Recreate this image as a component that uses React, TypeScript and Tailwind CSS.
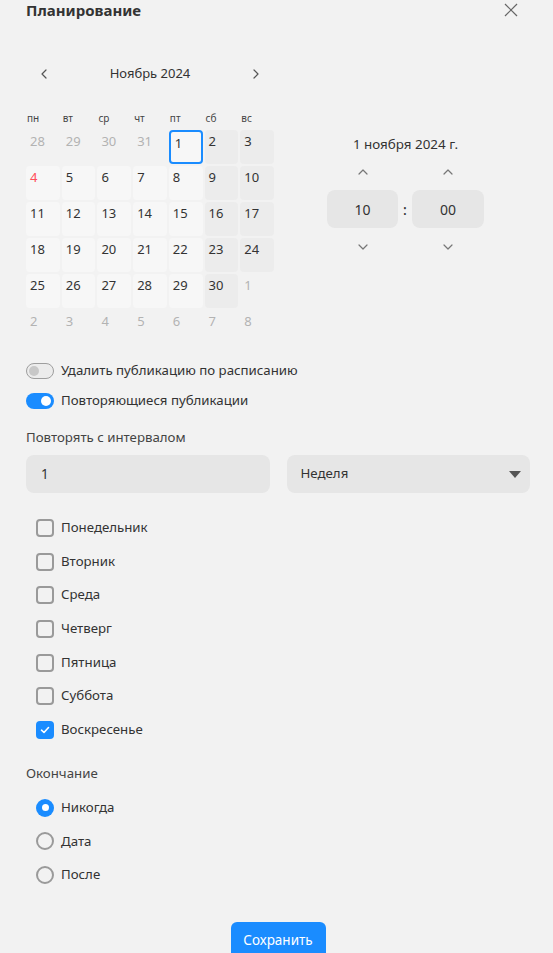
import React from "react";

type Kind = "other" | "day" | "weekend";
type Cell = { d: number; kind: Kind; red?: boolean; selected?: boolean };

const rows: Cell[][] = [
  [
    { d: 28, kind: "other" },
    { d: 29, kind: "other" },
    { d: 30, kind: "other" },
    { d: 31, kind: "other" },
    { d: 1, kind: "day", selected: true },
    { d: 2, kind: "weekend" },
    { d: 3, kind: "weekend" },
  ],
  [
    { d: 4, kind: "day", red: true },
    { d: 5, kind: "day" },
    { d: 6, kind: "day" },
    { d: 7, kind: "day" },
    { d: 8, kind: "day" },
    { d: 9, kind: "weekend" },
    { d: 10, kind: "weekend" },
  ],
  [
    { d: 11, kind: "day" },
    { d: 12, kind: "day" },
    { d: 13, kind: "day" },
    { d: 14, kind: "day" },
    { d: 15, kind: "day" },
    { d: 16, kind: "weekend" },
    { d: 17, kind: "weekend" },
  ],
  [
    { d: 18, kind: "day" },
    { d: 19, kind: "day" },
    { d: 20, kind: "day" },
    { d: 21, kind: "day" },
    { d: 22, kind: "day" },
    { d: 23, kind: "weekend" },
    { d: 24, kind: "weekend" },
  ],
  [
    { d: 25, kind: "day" },
    { d: 26, kind: "day" },
    { d: 27, kind: "day" },
    { d: 28, kind: "day" },
    { d: 29, kind: "day" },
    { d: 30, kind: "weekend" },
    { d: 1, kind: "other" },
  ],
  [
    { d: 2, kind: "other" },
    { d: 3, kind: "other" },
    { d: 4, kind: "other" },
    { d: 5, kind: "other" },
    { d: 6, kind: "other" },
    { d: 7, kind: "other" },
    { d: 8, kind: "other" },
  ],
];

const weekdays = ["пн", "вт", "ср", "чт", "пт", "сб", "вс"];
const days = ["Понедельник", "Вторник", "Среда", "Четверг", "Пятница", "Суббота", "Воскресенье"];

function Chevron({ dir, className }: { dir: "left" | "right" | "up" | "down"; className?: string }) {
  const pts: Record<string, string> = {
    left: "6,1 2,5 6,9",
    right: "2,1 6,5 2,9",
    up: "1,6 5,2 9,6",
    down: "1,3 5,7 9,3",
  };
  const horiz = dir === "left" || dir === "right";
  return (
    <svg
      width={horiz ? 8 : 10}
      height={horiz ? 10 : 8}
      viewBox={horiz ? "0 0 8 10" : "0 0 10 8"}
      className={className}
    >
      <polyline points={pts[dir]} fill="none" stroke="currentColor" strokeWidth="1.2" strokeLinecap="round" strokeLinejoin="round" />
    </svg>
  );
}

function DayCell({ c }: { c: Cell }) {
  let cls = "h-[34px] rounded-[4px] pl-[4px] pt-[2px] text-[13px] leading-[18px] ";
  if (c.kind === "other") cls += "text-[#b3b3b3]";
  else if (c.kind === "weekend") cls += "bg-[#ececec] text-[#333]";
  else cls += "bg-[#f7f7f7] " + (c.red ? "text-[#ff4d5a]" : "text-[#333]");
  if (c.selected) cls += " border-2 border-[#1a8cff] pl-[2px] pt-0";
  return <div className={cls}>{c.d}</div>;
}

function Toggle({ on }: { on: boolean }) {
  return on ? (
    <div className="w-[28px] h-[16px] rounded-full bg-[#1a8cff] flex items-center justify-end pr-[3px]">
      <div className="w-[10px] h-[10px] rounded-full bg-white" />
    </div>
  ) : (
    <div className="w-[28px] h-[16px] rounded-full border-[1.5px] border-[#9e9e9e] bg-[#ececec] flex items-center pl-[2px]">
      <div className="w-[10px] h-[10px] rounded-full bg-[#c8c8c8]" />
    </div>
  );
}

function Checkbox({ checked }: { checked: boolean }) {
  return checked ? (
    <div className="w-[18px] h-[18px] rounded-[4px] bg-[#1a8cff] flex items-center justify-center">
      <svg width="12" height="12" viewBox="0 0 12 12">
        <polyline points="2.5,6.2 5,8.5 9.5,3.5" fill="none" stroke="white" strokeWidth="1.6" strokeLinecap="round" strokeLinejoin="round" />
      </svg>
    </div>
  ) : (
    <div className="w-[18px] h-[18px] rounded-[4px] border-2 border-[#9a9a9a]" />
  );
}

function Radio({ checked }: { checked: boolean }) {
  return checked ? (
    <div className="w-[18px] h-[18px] rounded-full bg-[#1a8cff] flex items-center justify-center">
      <div className="w-[7px] h-[7px] rounded-full bg-white" />
    </div>
  ) : (
    <div className="w-[18px] h-[18px] rounded-full border-2 border-[#9a9a9a]" />
  );
}

export default function App() {
  return (
    <div className="w-[553px] h-[953px] overflow-hidden bg-[#f2f2f2] pl-[26px] pr-[23px] text-[#333] font-['Noto_Sans','Open_Sans',sans-serif]">
      {/* Header */}
      <div className="h-[20px] flex items-center justify-between">
        <div className="text-[15px] font-bold leading-[20px] text-[#333]">Планирование</div>
        <svg width="14" height="14" viewBox="0 0 14 14" className="mr-[12px] text-[#666]">
          <line x1="1" y1="1" x2="13" y2="13" stroke="currentColor" strokeWidth="1.2" />
          <line x1="13" y1="1" x2="1" y2="13" stroke="currentColor" strokeWidth="1.2" />
        </svg>
      </div>

      {/* Calendar + time */}
      <div className="mt-[42px] flex">
        <div className="w-[248px]">
          <div className="h-[24px] flex items-center justify-between px-[14px] text-[#555]">
            <Chevron dir="left" />
            <div className="text-[13px] text-[#333]">Ноябрь 2024</div>
            <Chevron dir="right" />
          </div>
          <div className="mt-[24px] h-[16px] grid grid-cols-7 gap-x-[2px]">
            {weekdays.map((w) => (
              <div key={w} className="pl-[1px] text-[10px] leading-[16px] text-[#444]">
                {w}
              </div>
            ))}
          </div>
          <div className="mt-[4px] grid grid-cols-7 gap-[2px]">
            {rows.flat().map((c, i) => (
              <DayCell key={i} c={c} />
            ))}
          </div>
        </div>

        <div className="flex-1 pl-[7px] flex flex-col items-center">
          <div className="mt-[72px] h-[20px] text-[13.4px] leading-[20px] text-[#333]">1 ноября 2024 г.</div>
          <div className="mt-[10px] flex items-center gap-[5px]">
            <div className="w-[71px] flex flex-col items-center">
              <div className="h-[16px] flex items-center text-[#777]">
                <Chevron dir="up" />
              </div>
              <div className="mt-[10px] w-[71px] h-[38px] rounded-[8px] bg-[#e6e6e6] flex items-center justify-center text-[14px] text-[#333]">
                10
              </div>
              <div className="mt-[10px] h-[16px] flex items-center text-[#777]">
                <Chevron dir="down" />
              </div>
            </div>
            <div className="text-[14px] font-medium text-[#333]">:</div>
            <div className="w-[72px] flex flex-col items-center">
              <div className="h-[16px] flex items-center text-[#777]">
                <Chevron dir="up" />
              </div>
              <div className="mt-[10px] w-[72px] h-[38px] rounded-[8px] bg-[#e6e6e6] flex items-center justify-center text-[14px] text-[#333]">
                00
              </div>
              <div className="mt-[10px] h-[16px] flex items-center text-[#777]">
                <Chevron dir="down" />
              </div>
            </div>
          </div>
        </div>
      </div>

      {/* Toggles */}
      <div className="mt-[17px] h-[20px] flex items-center gap-[7px]">
        <Toggle on={false} />
        <span className="text-[13.25px] text-[#333]">Удалить публикацию по расписанию</span>
      </div>
      <div className="mt-[10px] h-[20px] flex items-center gap-[7px]">
        <Toggle on={true} />
        <span className="text-[13.25px] text-[#333]">Повторяющиеся публикации</span>
      </div>

      {/* Interval */}
      <div className="mt-[16px] h-[20px] text-[13.25px] leading-[20px] text-[#444]">Повторять с интервалом</div>
      <div className="mt-[8px] grid grid-cols-2 gap-[17px]">
        <div className="h-[38px] rounded-[8px] bg-[#e6e6e6] flex items-center pl-[15px] text-[13.5px] text-[#333]">1</div>
        <div className="h-[38px] rounded-[8px] bg-[#e6e6e6] flex items-center justify-between pl-[14px] pr-[9px] text-[13.25px] text-[#333]">
          <span>Неделя</span>
          <svg width="12" height="7" viewBox="0 0 12 7">
            <polygon points="0,0 12,0 6,7" fill="#555" />
          </svg>
        </div>
      </div>

      {/* Weekdays */}
      <div className="mt-[23px] flex flex-col gap-[9.67px] pl-[10px]">
        {days.map((d, i) => (
          <div key={d} className="h-[24px] flex items-center gap-[7px]">
            <Checkbox checked={i === 6} />
            <span className="text-[13.25px] text-[#333]">{d}</span>
          </div>
        ))}
      </div>

      {/* End */}
      <div className="mt-[21px] h-[20px] text-[13.25px] leading-[20px] text-[#444]">Окончание</div>
      <div className="mt-[13px] flex flex-col gap-[9.5px] pl-[10px]">
        {["Никогда", "Дата", "После"].map((r, i) => (
          <div key={r} className="h-[24px] flex items-center gap-[7px]">
            <Radio checked={i === 0} />
            <span className="text-[13.25px] text-[#333]">{r}</span>
          </div>
        ))}
      </div>

      <div className="mt-[35px] flex justify-center">
        <button className="w-[95px] h-[36px] rounded-[6px] bg-[#1a8cff] text-white text-[13.5px]">Сохранить</button>
      </div>
    </div>
  );
}
